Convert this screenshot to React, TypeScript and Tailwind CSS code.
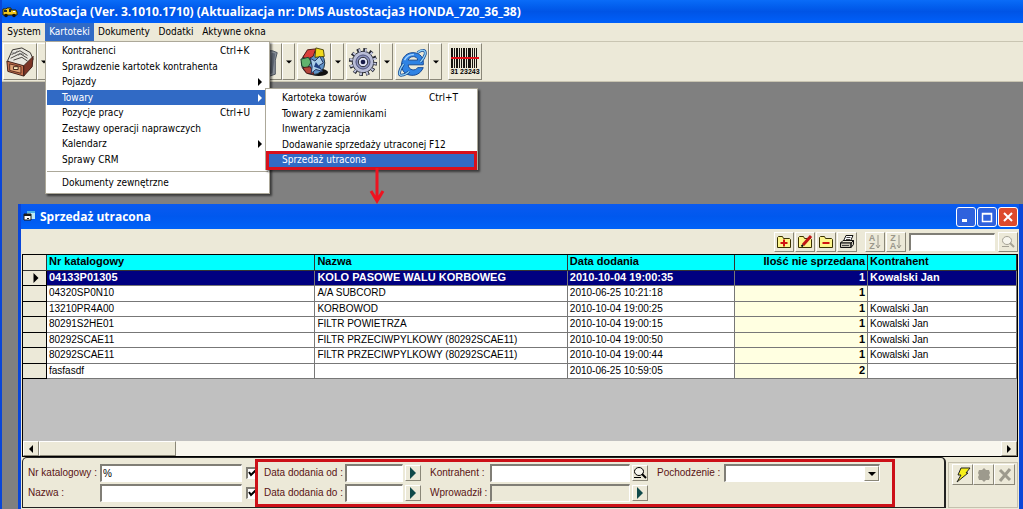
import { useState } from "react";
import type { ReactNode } from "react";
import clsx from "clsx";

const RAISED = "border border-t-white border-l-white border-r-[#8a8778] border-b-[#8a8778]";
const SUNKEN = "border-t-2 border-l-2 border-t-[#807e76] border-l-[#807e76] border-r border-b border-r-white border-b-white";

type MenuEntry = { label: string; shortcut?: string; sub?: boolean };

const MENU: MenuEntry[] = [
  { label: "Kontrahenci", shortcut: "Ctrl+K" },
  { label: "Sprawdzenie kartotek kontrahenta" },
  { label: "Pojazdy", sub: true },
  { label: "Towary", sub: true },
  { label: "Pozycje pracy", shortcut: "Ctrl+U" },
  { label: "Zestawy operacji naprawczych" },
  { label: "Kalendarz", sub: true },
  { label: "Sprawy CRM" },
];

const SUBMENU: MenuEntry[] = [
  { label: "Kartoteka towarów", shortcut: "Ctrl+T" },
  { label: "Towary z zamiennikami" },
  { label: "Inwentaryzacja" },
  { label: "Dodawanie sprzedaży utraconej", shortcut: "F12" },
  { label: "Sprzedaż utracona" },
];

const ROWS = [
  ["04133P01305", "KOLO PASOWE WALU KORBOWEG", "2010-10-04 19:00:35", "1", "Kowalski Jan"],
  ["04320SP0N10", "A/A SUBCORD", "2010-06-25 10:21:18", "1", ""],
  ["13210PR4A00", "KORBOWOD", "2010-10-04 19:00:25", "1", "Kowalski Jan"],
  ["80291S2HE01", "FILTR POWIETRZA", "2010-10-04 19:00:15", "1", "Kowalski Jan"],
  ["80292SCAE11", "FILTR PRZECIWPYLKOWY (80292SCAE11)", "2010-10-04 19:00:50", "1", "Kowalski Jan"],
  ["80292SCAE11", "FILTR PRZECIWPYLKOWY (80292SCAE11)", "2010-10-04 19:00:44", "1", "Kowalski Jan"],
  ["fasfasdf", "", "2010-06-25 10:59:05", "2", ""],
];

const CarIcon = () => (
  <svg viewBox="0 0 16 12" className="h-3 w-4" aria-hidden>
    <path d="M1 3h3l1-1h4v2h5l1 2v3H1z" fill="#f2c81e" stroke="#2a2400" strokeWidth="1" />
    <path d="M2 4h3v2H2zM7 3h2v3H7z" fill="#20252e" />
    <path d="M11 5h2v1h-2z" fill="#fff" />
    <circle cx="4" cy="9.5" r="1.8" fill="#111" />
    <circle cx="12" cy="9.5" r="1.8" fill="#111" />
  </svg>
);

const FormIcon = () => (
  <svg viewBox="0 0 13 13" className="h-[13px] w-[13px]" aria-hidden>
    <path d="M4 1h8v8H4z" fill="#bfeaf4" />
    <path d="M4 1h8v2H4z" fill="#4fb5e6" />
    <path d="M1 4h7v6H1z" fill="#fff" stroke="#1a1a1a" strokeWidth="1" />
    <path d="M1 4h7v2H1zM4 8h2v1H4z" fill="#1a1a1a" />
  </svg>
);

const CardIndexIcon = () => (
  <svg viewBox="0 0 32 32" className="h-[30px] w-[30px]" aria-hidden>
    <path d="M3 14 8 3l10-2 9 5 3 7-8 8-18-2z" fill="#e9e7df" stroke="#2d2a26" />
    <path d="M7 8l9-4 8 5M6 12l10-5 8 5M9 14l9-3 6 4" fill="none" stroke="#3e3a36" />
    <path d="M8 6l3 1 2-3M14 9l3-2 3 1" fill="none" stroke="#777" />
    <path d="M2 15l18 5v11L3 26z" fill="#c4704d" stroke="#3b1c14" />
    <path d="M20 20l10-10-1 11-9 10z" fill="#7d3526" stroke="#3b1c14" />
    <path d="M5 18l12 3v7L5 25z" fill="#e0a478" stroke="#56291c" />
    <path d="M9 21h5v3H9z" fill="#fff3c4" stroke="#3b1c14" />
  </svg>
);

const DocumentIcon = () => (
  <svg viewBox="0 0 32 32" className="h-[30px] w-[30px]" aria-hidden>
    <path d="M6 4h18l5 2-2 8v15l-6 2H7z" fill="#8b929b" stroke="#4b525c" />
    <path d="M23 6l4 1-3 21-3 1z" fill="#626a76" />
  </svg>
);

const GlobeIcon = () => (
  <svg viewBox="0 0 32 32" className="h-[30px] w-[30px]" aria-hidden>
    <ellipse cx="21" cy="27" rx="10" ry="4" fill="#111" />
    <circle cx="15" cy="17" r="12.5" fill="#5f93c8" stroke="#1c2c34" />
    <path d="M4 11 9 3l9-1-3 8-6 3z" fill="#d9403a" stroke="#4a1512" />
    <path d="M18 1l8 2 1 7-10 1z" fill="#f0d91c" stroke="#4a430a" />
    <path d="M2 13l8-2 3 5-5 8-5-4z" fill="#61b36e" stroke="#17422a" />
    <path d="M4 22l8-1 4 8-8-1z" fill="#b5443a" stroke="#4a1512" />
    <path d="M12 12l5 3 5-5 4 7-5 3 4 6-7-2-5 4 1-7z" fill="#a9cdea" stroke="#1d2d58" />
    <path d="M18 16l6 8-8-3z" fill="#1f3f83" />
  </svg>
);

const GearIcon = () => (
  <svg viewBox="0 0 32 32" className="h-[30px] w-[30px]" aria-hidden>
    <circle cx="16" cy="16" r="13" fill="none" stroke="#20222c" strokeWidth="4" strokeDasharray="3.6 3.2" />
    <circle cx="16" cy="16" r="11.5" fill="#b9bdd8" stroke="#20222c" />
    <circle cx="16" cy="16" r="12.8" fill="none" stroke="#c4c8e2" strokeWidth="3" strokeDasharray="2 4.8" strokeDashoffset="-0.8" />
    <circle cx="16" cy="16" r="7.5" fill="#8f95c0" stroke="#454b74" />
    <circle cx="16" cy="16" r="5" fill="#dfe2f2" stroke="#20222c" />
    <circle cx="16" cy="16" r="2.5" fill="#161a48" />
  </svg>
);

const BrowserIcon = () => (
  <svg viewBox="0 0 32 32" className="h-[30px] w-[30px]" aria-hidden>
    <path d="M28 19H12c0 6 8 7 10 3h6c-3 7-9 9-14 8C7 29 4 23 5 17 6 10 11 6 17 6c8 0 12 6 11 13zM12 14h10c0-5-9-5-10 0z" fill="#2f83e4" stroke="#12448f" />
    <path d="M8 14c2-4 6-6 10-6" fill="none" stroke="#a5d4ff" strokeWidth="1.5" />
    <path d="M22 6c5-4 9-3 8 2-1 3-3 6-5 8M7 18c-5 7-6 13-2 12 3 0 6-2 8-4" fill="none" stroke="#12448f" strokeWidth="3" />
    <path d="M22 6c5-4 9-3 8 2-1 3-3 6-5 8M7 18c-5 7-6 13-2 12 3 0 6-2 8-4" fill="none" stroke="#8fd0f7" strokeWidth="1.5" />
  </svg>
);

const BARS = [
  [0, 2], [3, 1], [5, 2], [8, 1], [10, 1], [12, 2], [15, 1], [17, 3], [21, 1], [23, 1], [25, 1],
];

const BarcodeIcon = () => (
  <span className="flex flex-col items-center">
    <svg viewBox="0 0 28 20" className="h-5 w-7" aria-hidden>
      {BARS.map(([x, w]) => (
        <rect key={x} x={x} y="0" width={w} height="20" fill="#16130f" />
      ))}
      <path d="M0 10h28" stroke="#e0141c" strokeWidth="2" />
    </svg>
    <span className="font-['Liberation_Sans'] text-[7px] leading-[7px] font-bold text-black">31 23243</span>
  </span>
);

const FolderIcon = ({ kind }: { kind: "add" | "edit" | "remove" }) => (
  <svg viewBox="0 0 16 16" className="h-4 w-4" aria-hidden>
    <path d="M1.5 13.5v-10l1-1h4l1 2h6l1 1v8z" fill="#fdf58c" stroke="#3a3200" />
    {kind === "add" && <path d="M8 5.5v7M4.5 9h7" stroke="#d01212" strokeWidth="2" />}
    {kind === "remove" && <path d="M4.5 9h7" stroke="#d01212" strokeWidth="2" />}
    {kind === "edit" && <path d="M6 11 14 2" stroke="#c01414" strokeWidth="3" />}
    {kind === "edit" && <path d="M4.5 12.5 6 11" stroke="#111" strokeWidth="2" />}
  </svg>
);

const PrinterIcon = () => (
  <svg viewBox="0 0 16 16" className="h-4 w-4" aria-hidden>
    <path d="M4.5 7 7 1.5h7L11.500 7z" fill="#fff" stroke="#111" />
    <path d="M1.5 9 4 6.5h10.500L12 9z" fill="#ece9d8" stroke="#111" />
    <path d="M1.5 9H12v4.500H1.500zM12 9l2.500-2.500v4L12 13.500z" fill="#c9c6b8" stroke="#111" />
    <path d="M3 11.500h7M7.500 3.500h4M7 5.500h4" stroke="#444" />
  </svg>
);

const SortIcon = ({ top, bottom }: { top: string; bottom: string }) => (
  <span className="flex items-center text-[#9a978a]">
    <span className="flex flex-col font-['Liberation_Sans'] text-[9px] leading-[8px] font-bold">
      <span>{top}</span>
      <span>{bottom}</span>
    </span>
    <svg viewBox="0 0 6 16" className="h-4 w-1.5" aria-hidden>
      <path d="M3 1v13M1 11l2 3 2-3" fill="none" stroke="currentColor" />
    </svg>
  </span>
);

const LensIcon = ({ className }: { className?: string }) => (
  <svg viewBox="0 0 14 14" className={clsx("h-3.5 w-3.5", className)} aria-hidden>
    <ellipse cx="6" cy="5.5" rx="4.5" ry="4" fill="#f7f6ee" stroke="currentColor" />
    <path d="M1 11.5h7" stroke="currentColor" />
    <path d="M9 8l4 4" stroke="currentColor" strokeWidth="2" />
  </svg>
);

const Triangle = ({ dir, className }: { dir: "right" | "left" | "down"; className?: string }) => (
  <svg viewBox="0 0 8 8" className={clsx(className ?? "h-2 w-2")} fill="currentColor" aria-hidden>
    {dir === "right" && <path d="M2 0l4 4-4 4z" />}
    {dir === "left" && <path d="M6 0 2 4l4 4z" />}
    {dir === "down" && <path d="M0 2h8L4 6z" />}
  </svg>
);

const MenuItem = ({ item, active, wide, children }: { item: MenuEntry; active?: boolean; wide?: boolean; children?: ReactNode }) => (
  <li className="relative h-[15px] odd:h-4">
    <button
      type="button"
      className={clsx(
        "flex h-full w-full items-center text-left whitespace-nowrap",
        wide ? "pl-4" : "pl-[15px]",
        active && "bg-[#316ac5] text-white",
      )}
    >
      <span className="flex-1">{item.label}</span>
      {item.shortcut && <span className="w-12">{item.shortcut}</span>}
      {item.sub && <Triangle dir="right" className="mr-1 h-2 w-2" />}
    </button>
    {children}
  </li>
);

const Submenu = () => (
  <ul className="absolute -top-[2px] left-[218px] z-30 w-[213px] border border-[#aca899] bg-white py-px text-black shadow-[2px_2px_2px_rgba(0,0,0,0.55)]">
    {SUBMENU.map((item) => {
      const last = item.label === "Sprzedaż utracona";
      return (
        <MenuItem key={item.label} item={item} active={last} wide>
          {last && <span className="pointer-events-none absolute inset-x-0 -top-px -bottom-[2px] border-[3px] border-[#d8101c]" />}
          {last && (
            <svg viewBox="0 0 16 36" className="absolute top-4 left-[103px] h-9 w-4" fill="none" stroke="#ee1320" strokeWidth="3" aria-hidden>
              <path d="M8 0v33M2 23l6 10 6-10" />
            </svg>
          )}
        </MenuItem>
      );
    })}
  </ul>
);

const DropMenu = () => (
  <div className="absolute top-[18px] left-0 z-20 w-[225px] border border-[#aca899] bg-white p-px text-black shadow-[2px_2px_2px_rgba(0,0,0,0.55)]">
    <ul>
      {MENU.map((item) => (
        <MenuItem key={item.label} item={item} active={item.label === "Towary"}>
          {item.label === "Towary" && <Submenu />}
        </MenuItem>
      ))}
    </ul>
    <hr className="mt-1 mb-[3px] border-[#aca899]" />
    <ul className="pb-px">
      <MenuItem item={{ label: "Dokumenty zewnętrzne" }} />
    </ul>
  </div>
);

const MenuBar = () => (
  <nav className="flex h-[18px] items-stretch bg-[#ece9d8] pl-px">
    <button type="button" className="w-[42px]">System</button>
    <div className="relative w-[49px]">
      <button type="button" className="h-full w-full bg-[#316ac5] text-white">Kartoteki</button>
      <DropMenu />
    </div>
    <button type="button" className="w-[60px]">Dokumenty</button>
    <button type="button" className="w-11">Dodatki</button>
    <button type="button" className="w-[72px]">Aktywne okna</button>
  </nav>
);

const TOOLS: { name: string; icon: ReactNode }[] = [
  { name: "Kartoteki", icon: <CardIndexIcon /> },
  { name: "Dokumenty", icon: <DocumentIcon /> },
  { name: "Zlecenia", icon: <DocumentIcon /> },
  { name: "Faktury", icon: <DocumentIcon /> },
  { name: "Magazyn", icon: <DocumentIcon /> },
  { name: "Raporty", icon: <DocumentIcon /> },
  { name: "Moduły", icon: <GlobeIcon /> },
  { name: "Ustawienia", icon: <GearIcon /> },
  { name: "Internet", icon: <BrowserIcon /> },
];

const ToolBar = () => (
  <div className="flex h-[41px] items-center gap-[2px] border-t border-b border-t-[#c9c5b2] border-b-[#c9c5b2] bg-[#ece9d8] pl-px">
    {TOOLS.map((tool) => (
      <div key={tool.name} className="flex h-[37px] w-[47px]">
        <button type="button" aria-label={tool.name} className={clsx("flex w-[34px] items-center justify-center", RAISED)}>
          {tool.icon}
        </button>
        <button type="button" aria-label={`${tool.name} – więcej`} className={clsx("flex flex-1 items-center justify-center", RAISED)}>
          <Triangle dir="down" className="h-1.5 w-1.5" />
        </button>
      </div>
    ))}
    <button type="button" aria-label="Kod kreskowy" className={clsx("ml-1 flex h-[37px] w-[34px] items-center justify-center", RAISED)}>
      <BarcodeIcon />
    </button>
  </div>
);

const CaptionButton = ({ label, className, children }: { label: string; className: string; children: ReactNode }) => (
  <button type="button" aria-label={label} className={clsx("flex h-5 w-5 items-center justify-center rounded-[3px] border border-white", className)}>
    <svg viewBox="0 0 14 14" className="h-3.5 w-3.5" fill="none" stroke="#fff" aria-hidden>
      {children}
    </svg>
  </button>
);

const IconButton = ({ label, className, children }: { label: string; className?: string; children: ReactNode }) => (
  <button type="button" aria-label={label} className={clsx("flex h-5 w-5 items-center justify-center bg-[#ece9d8]", RAISED, className)}>
    {children}
  </button>
);

const GridTools = () => (
  <div className="flex h-[25px] items-center justify-end">
    <IconButton label="Dodaj"><FolderIcon kind="add" /></IconButton>
    <IconButton label="Edytuj" className="ml-px"><FolderIcon kind="edit" /></IconButton>
    <IconButton label="Usuń" className="ml-px"><FolderIcon kind="remove" /></IconButton>
    <IconButton label="Drukuj" className="ml-px"><PrinterIcon /></IconButton>
    <IconButton label="Sortuj rosnąco" className="ml-2"><SortIcon top="A" bottom="Z" /></IconButton>
    <IconButton label="Sortuj malejąco" className="ml-px"><SortIcon top="Z" bottom="A" /></IconButton>
    <input aria-label="Szukaj" className={clsx("ml-[3px] h-[18px] w-[86px] bg-white", SUNKEN)} />
    <IconButton label="Znajdź" className="ml-[3px]"><LensIcon className="text-[#a5a295]" /></IconButton>
  </div>
);

const Grid = () => (
  <div className="flex min-h-0 flex-1 flex-col border border-black bg-[#c0c0c0]">
    <table className="w-full table-fixed border-separate border-spacing-0 font-['Liberation_Sans',sans-serif] text-[10px] leading-[13px] text-black">
      <colgroup>
        <col className="w-6" />
        <col className="w-[27%]" />
        <col className="w-[25.4%]" />
        <col className="w-[16.8%]" />
        <col className="w-[13.4%]" />
        <col />
      </colgroup>
      <thead className="text-[11px]">
        <tr className="h-4 bg-[#00ffff] text-left [&>th]:border-r [&>th]:border-b [&>th]:border-[#333] [&>th]:p-0 [&>th]:pl-[2px] [&>th]:align-top">
          <th className="bg-[#ece9d8]" />
          <th>Nr katalogowy</th>
          <th>Nazwa</th>
          <th>Data dodania</th>
          <th className="pr-[2px]! text-right">Ilość nie sprzedana</th>
          <th>Kontrahent</th>
        </tr>
      </thead>
      <tbody>
        {ROWS.map((row, i) => (
          <tr
            key={i}
            className={clsx(
              "h-[15px] even:h-4 [&>td]:border-r [&>td]:border-b [&>td]:border-[#777] [&>td]:p-0 [&>td]:pl-[2px] [&>td]:align-top",
              i === 0 ? "bg-[#000080] text-[11px] font-bold text-white" : "bg-white",
            )}
          >
            <td className="border-black! bg-[#ece9d8] text-black">
              {i === 0 && <Triangle dir="right" className="mx-auto mt-0.5 h-2.5 w-2.5" />}
            </td>
            <td>{row[0]}</td>
            <td>{row[1]}</td>
            <td>{row[2]}</td>
            <td className={clsx("pr-[2px]! text-right text-[11px] font-bold", i > 0 && "bg-[#ffffe1]")}>{row[3]}</td>
            <td>{row[4]}</td>
          </tr>
        ))}
      </tbody>
    </table>
    <div className="mt-auto flex h-[15px] bg-[#f8f6ee] text-black">
      <button type="button" aria-label="Przewiń w lewo" className={clsx("flex w-4 items-center justify-center bg-[#ece9d8]", RAISED)}>
        <Triangle dir="left" />
      </button>
      <div className={clsx("w-[137px] bg-[#ece9d8]", RAISED)} />
      <button type="button" aria-label="Przewiń w prawo" className={clsx("ml-auto flex w-4 items-center justify-center bg-[#ece9d8]", RAISED)}>
        <Triangle dir="right" />
      </button>
    </div>
  </div>
);

const Check = ({ label }: { label: string }) => {
  const [on, setOn] = useState(true);
  return (
    <label className="relative block h-3 w-[9px] overflow-hidden">
      <input
        type="checkbox"
        aria-label={label}
        checked={on}
        onChange={() => setOn(!on)}
        className={clsx("block h-3 w-3 appearance-none bg-white", SUNKEN)}
      />
      {on && (
        <svg viewBox="0 0 12 12" className="pointer-events-none absolute top-0 left-0 h-3 w-3" fill="none" stroke="#000" strokeWidth="2" aria-hidden>
          <path d="M3 5l2 3 5-5" />
        </svg>
      )}
    </label>
  );
};

const PickButton = ({ label, children }: { label: string; children?: ReactNode }) => (
  <button type="button" aria-label={label} className={clsx("ml-[2px] flex h-4 w-4 items-center justify-center bg-[#ece9d8]", RAISED)}>
    {children ?? <Triangle dir="right" className="h-3 w-3 text-[#0f4a4a]" />}
  </button>
);

const FIELD = clsx("h-[18px] w-full min-w-0 pl-px text-black", SUNKEN);

const Filters = () => (
  <div className="flex h-[51px] shrink-0 font-['Liberation_Sans',sans-serif] text-[10px] leading-[14px] whitespace-nowrap text-[#5a1414]">
    <form className="flex flex-1 rounded-t-[5px] border-t border-r-2 border-b border-l border-[#222] bg-[#ece9d8] pl-[5px]">
      <div className="grid grid-cols-[72px_142px_13px] content-center items-center gap-y-[2px]">
        <label htmlFor="nr">Nr katalogowy :</label>
        <input id="nr" defaultValue="%" className={clsx(FIELD, "bg-white")} />
        <div className="pl-1"><Check label="Filtruj po numerze" /></div>
        <label htmlFor="nazwa">Nazwa :</label>
        <input id="nazwa" className={clsx(FIELD, "bg-white")} />
        <div className="pl-1"><Check label="Filtruj po nazwie" /></div>
      </div>
      <div className="mt-px grid h-12 grid-cols-[81px_58px_27px_60px_140px_27px_67px_156px] content-center items-center gap-y-[2px] border-[3px] border-[#cc1018] pr-3 pl-[6px]">
        <label htmlFor="od">Data dodania od :</label>
        <input id="od" className={clsx(FIELD, "bg-white")} />
        <PickButton label="Wybierz datę od" />
        <label htmlFor="kontrahent">Kontrahent :</label>
        <input id="kontrahent" className={clsx(FIELD, "bg-white")} />
        <PickButton label="Szukaj kontrahenta"><LensIcon className="text-black" /></PickButton>
        <label htmlFor="pochodzenie">Pochodzenie :</label>
        <div className="relative">
          <select id="pochodzenie" className={clsx("block appearance-none bg-white", FIELD)}>
            <option></option>
          </select>
          <span className={clsx("pointer-events-none absolute top-[2px] right-px flex h-[15px] w-[15px] items-center justify-center bg-[#ece9d8] text-black", RAISED)}>
            <Triangle dir="down" />
          </span>
        </div>
        <label htmlFor="do">Data dodania do :</label>
        <input id="do" className={clsx(FIELD, "bg-white")} />
        <PickButton label="Wybierz datę do" />
        <label htmlFor="wprowadzil">Wprowadził :</label>
        <input id="wprowadzil" readOnly className={clsx(FIELD, "bg-[#ece9d8]")} />
        <PickButton label="Wybierz osobę" />
      </div>
    </form>
    <div className="mt-[5px] ml-[2px] flex w-[70px] items-start border border-[#c5c1ae] pt-px pl-[3px]">
      <button type="button" aria-label="Filtruj" className={clsx("flex h-[21px] w-[21px] items-center justify-center", RAISED)}>
        <svg viewBox="0 0 16 16" className="h-4 w-4" aria-hidden>
          <path d="M6 1h9l-4 5h2L2 15l4-7H3z" fill="#f6f01c" stroke="#222" />
        </svg>
      </button>
      <button type="button" aria-label="Zapisz filtr" className={clsx("flex h-[21px] w-[21px] items-center justify-center", RAISED)}>
        <svg viewBox="0 0 16 16" className="h-4 w-4" fill="#9d9a8d" aria-hidden>
          <path d="M8 1l2 2h3l1 3-1 2 1 2-1 3h-3l-2 2-2-2H3l-1-3 1-2-1-2 1-3h3z" />
        </svg>
      </button>
      <button type="button" aria-label="Wyczyść filtr" className={clsx("flex h-[21px] w-[21px] items-center justify-center", RAISED)}>
        <svg viewBox="0 0 16 16" className="h-4 w-4" fill="none" stroke="#9d9a8d" strokeWidth="3" aria-hidden>
          <path d="M3 3l10 10M13 2 3 14" />
        </svg>
      </button>
    </div>
  </div>
);

const LostSalesWindow = () => (
  <section className="flex min-h-0 flex-1 flex-col border-r-4 border-l-[3px] border-[#0a46d8] bg-[#ece9d8]">
    <header className="flex h-[25px] shrink-0 items-center bg-linear-to-b from-[#0a5af0] via-[#0058ee] to-[#0062f8] pr-px pl-[2px] text-white">
      <FormIcon />
      <h2 className="ml-1 flex-1 font-['Open_Sans',sans-serif] text-[12px] font-bold">Sprzedaż utracona</h2>
      <div className="flex gap-px">
        <CaptionButton label="Minimalizuj" className="bg-[#2f62dd]">
          <path d="M3 10.5h5" strokeWidth="3" />
        </CaptionButton>
        <CaptionButton label="Maksymalizuj" className="bg-[#2f62dd]">
          <path d="M2.5 3.5h9v8h-9zM2 4h10" strokeWidth="1.5" />
        </CaptionButton>
        <CaptionButton label="Zamknij" className="bg-[#dd4a2c]">
          <path d="M3 3l8 8M11 3l-8 8" strokeWidth="2" />
        </CaptionButton>
      </div>
    </header>
    <div className="flex min-h-0 flex-1 flex-col px-px pb-px">
      <GridTools />
      <Grid />
      <Filters />
    </div>
  </section>
);

export default function App() {
  return (
    <div className="flex h-screen min-h-[420px] flex-col overflow-hidden border-l-2 border-[#0a46d8] bg-[#808080] font-['DejaVu_Sans_Condensed','DejaVu_Sans',sans-serif] text-[10px] leading-[14px] text-black">
      <header className="flex h-[23px] shrink-0 items-center gap-1 bg-linear-to-b from-[#0a6cf8] via-[#0054e6] to-[#0060fa] text-white">
        <CarIcon />
        <h1 className="font-['Open_Sans',sans-serif] text-[12px] font-bold whitespace-nowrap">AutoStacja (Ver. 3.1010.1710) (Aktualizacja nr: DMS AustoStacja3 HONDA_720_36_38)</h1>
      </header>
      <MenuBar />
      <ToolBar />
      <main className="flex min-h-0 flex-1 flex-col pt-[122px] pl-4">
        <LostSalesWindow />
      </main>
    </div>
  );
}
